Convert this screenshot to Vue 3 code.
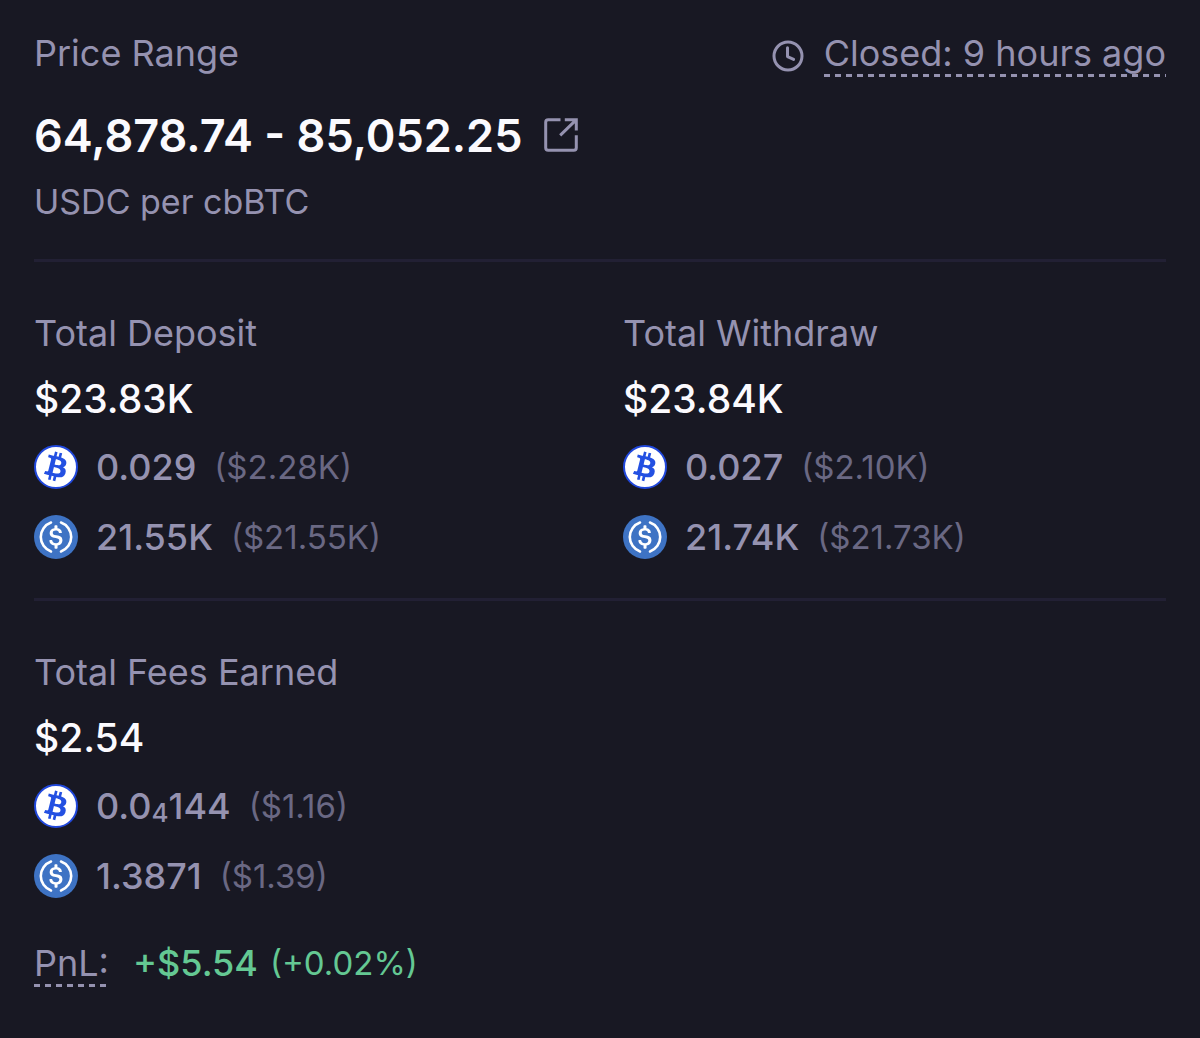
<script setup>
const totals = [
  {
    title: 'Total Deposit',
    amount: '$23.83K',
    tokens: [
      { kind: 'btc', parts: ['0.029'], usd: '($2.28K)' },
      { kind: 'usdc', parts: ['21.55K'], usd: '($21.55K)' },
    ],
  },
  {
    title: 'Total Withdraw',
    amount: '$23.84K',
    tokens: [
      { kind: 'btc', parts: ['0.027'], usd: '($2.10K)' },
      { kind: 'usdc', parts: ['21.74K'], usd: '($21.73K)' },
    ],
  },
]

const fees = [
  {
    title: 'Total Fees Earned',
    amount: '$2.54',
    tokens: [
      { kind: 'btc', parts: ['0.0', '4', '144'], usd: '($1.16)' },
      { kind: 'usdc', parts: ['1.3871'], usd: '($1.39)' },
    ],
  },
]

const sections = [totals, fees]
</script>

<template>
  <main class="position">
    <header class="range">
      <div class="range-top">
        <h2 class="label">Price Range</h2>
        <div class="status">
          <svg class="clock" viewBox="0 0 32 32" aria-hidden="true">
            <circle cx="16" cy="16" r="14" />
            <path d="M15.5 7.8V16.6L21.6 19.4" />
          </svg>
          <span class="label hint">Closed: 9 hours ago</span>
        </div>
      </div>
      <div class="price">
        <span>64,878.74 - 85,052.25</span>
        <a class="open" href="#" aria-label="Open position">
          <svg viewBox="0 0 34 34" aria-hidden="true">
            <path d="M16.5 1.7H4.2Q1.7 1.7 1.7 4.2V29.8Q1.7 32.3 4.2 32.3H29.8Q32.3 32.3 32.3 29.8V17.2" />
            <path d="M20.8 1.7H32.3V12.6M31.6 2.4L16.2 17.4" />
          </svg>
        </a>
      </div>
      <p class="unit">USDC per cbBTC</p>
    </header>

    <section v-for="(group, g) in sections" :key="g" class="group">
      <article v-for="item in group" :key="item.title">
        <h2 class="label">{{ item.title }}</h2>
        <p class="amount">{{ item.amount }}</p>
        <ul class="tokens">
          <li v-for="token in item.tokens" :key="token.kind" class="token">
            <svg v-if="token.kind === 'btc'" class="coin" viewBox="0 0 44 44" aria-hidden="true">
              <circle cx="22" cy="22" r="21" fill="#fff" stroke="#2148dc" stroke-width="2" />
              <path
                transform="translate(-1.4 -1.6) scale(1.95)"
                fill="#2350e2"
                d="M17.288 10.291c.24-1.59-.974-2.45-2.64-3.03l.54-2.153-1.315-.33-.525 2.107c-.345-.087-.705-.167-1.064-.25l.526-2.127-1.32-.33-.54 2.165c-.285-.067-.565-.132-.84-.2l-1.815-.45-.35 1.407s.975.225.955.236c.535.136.63.486.615.766l-1.477 5.92c-.075.166-.24.406-.614.314.015.02-.96-.24-.96-.24l-.66 1.51 1.71.426.93.242-.54 2.19 1.32.327.54-2.17c.36.1.705.19 1.05.273l-.51 2.154 1.32.33.545-2.19c2.24.427 3.93.257 4.64-1.774.57-1.637-.03-2.58-1.217-3.196.854-.193 1.5-.76 1.68-1.93h.01zm-3.01 4.22c-.404 1.64-3.157.75-4.05.53l.72-2.9c.896.23 3.757.67 3.33 2.37zm.41-4.24c-.37 1.49-2.662.735-3.405.55l.654-2.64c.744.18 3.137.524 2.75 2.084v.006z"
              />
            </svg>
            <svg v-else class="coin" viewBox="0 0 44 44" aria-hidden="true">
              <circle cx="22" cy="22" r="22" fill="#3e73c4" />
              <path
                d="M17 7.5A15.4 15.4 0 0 0 17 36.5M27 7.5A15.4 15.4 0 0 1 27 36.5"
                fill="none"
                stroke="#fff"
                stroke-width="2.6"
                stroke-linecap="round"
              />
              <path
                transform="translate(-3.6 -3.6) scale(1.6)"
                fill="#fff"
                d="M20.022 18.124c0-2.124-1.28-2.852-3.84-3.156-1.828-.243-2.193-.728-2.193-1.578 0-.85.61-1.396 1.828-1.396 1.097 0 1.707.364 2.011 1.275a.458.458 0 00.427.303h.975a.416.416 0 00.427-.425v-.06a3.04 3.04 0 00-2.743-2.489V9.142c0-.243-.183-.425-.487-.486h-.915c-.243 0-.426.182-.487.486v1.396c-1.829.242-2.986 1.456-2.986 2.974 0 2.002 1.218 2.791 3.778 3.095 1.707.303 2.255.668 2.255 1.639 0 .97-.853 1.638-2.011 1.638-1.585 0-2.133-.667-2.316-1.578-.06-.242-.244-.364-.427-.364h-1.036a.416.416 0 00-.426.425v.06c.243 1.518 1.219 2.61 3.23 2.914v1.457c0 .242.183.425.487.485h.915c.243 0 .426-.182.487-.485V21.34c1.829-.303 3.047-1.578 3.047-3.217z"
              />
            </svg>
            <span class="quantity">{{ token.parts[0] }}<small v-if="token.parts[1]" class="zeros">{{ token.parts[1] }}</small>{{ token.parts[2] }}</span>
            <span class="usd">{{ token.usd }}</span>
          </li>
        </ul>
      </article>
    </section>

    <footer class="pnl">
      <span class="label hint">PnL:</span>
      <span class="gain">+$5.54</span>
      <span class="gain-rate">(+0.02%)</span>
    </footer>
  </main>
</template>

<style>
body {
  background: #181823;
}
</style>

<style scoped>
.position {
  padding: 31px 34px 50px;
  font-family: Inter, "Liberation Sans", sans-serif;
  color: #9592b0;
}

h2,
p,
ul {
  margin: 0;
  padding: 0;
  list-style: none;
}

.label {
  font-size: 36px;
  line-height: 44px;
  font-weight: 400;
}

.range {
  padding-bottom: 37px;
}

.range-top,
.status,
.price,
.token,
.pnl {
  display: flex;
  align-items: center;
}

.range-top {
  justify-content: space-between;
}

.status {
  gap: 20px;
}

.clock {
  width: 32px;
  height: 32px;
  margin-top: 6px;
  fill: none;
  stroke: currentColor;
  stroke-width: 3;
  stroke-linecap: round;
  stroke-linejoin: round;
}

.hint {
  padding-bottom: 2px;
  margin-bottom: -2px;
  background: repeating-linear-gradient(90deg, currentColor 0 6px, transparent 6px 11px) left bottom / 100% 3px no-repeat;
}

.price {
  gap: 22px;
  margin-top: 33px;
  font-size: 45px;
  line-height: 56px;
  font-weight: 600;
  color: #fbfafe;
}

.open {
  display: flex;
  margin-bottom: 2px;
  color: #9592b0;
}

.open svg {
  width: 34px;
  height: 34px;
  fill: none;
  stroke: currentColor;
  stroke-width: 3;
}

.unit {
  margin-top: 18px;
  font-size: 34px;
  line-height: 40px;
}

.group {
  display: grid;
  grid-template-columns: 1fr 1fr;
  gap: 46px;
  padding: 49px 0 39px;
  border-top: 3px solid #222034;
}

.group:last-of-type {
  padding-bottom: 43px;
}

.amount {
  margin-top: 20px;
  font-size: 39px;
  line-height: 48px;
  font-weight: 500;
  color: #fbfafe;
}

.tokens {
  display: grid;
  gap: 26px;
  margin-top: 22px;
}

.token {
  height: 44px;
}

.coin {
  width: 44px;
  height: 44px;
  margin-right: 18px;
}

.quantity {
  font-size: 36px;
  line-height: 44px;
  font-weight: 500;
}

.zeros {
  font-size: 26px;
  line-height: 1;
  position: relative;
  top: 3px;
}

.usd {
  margin-left: 18px;
  font-size: 33px;
  line-height: 44px;
  color: #6a6883;
}

.gain,
.gain-rate {
  color: #64c893;
  line-height: 44px;
}

.gain {
  margin-left: 24px;
  font-size: 36px;
  font-weight: 500;
}

.gain-rate {
  margin-left: 12px;
  font-size: 33px;
}
</style>
